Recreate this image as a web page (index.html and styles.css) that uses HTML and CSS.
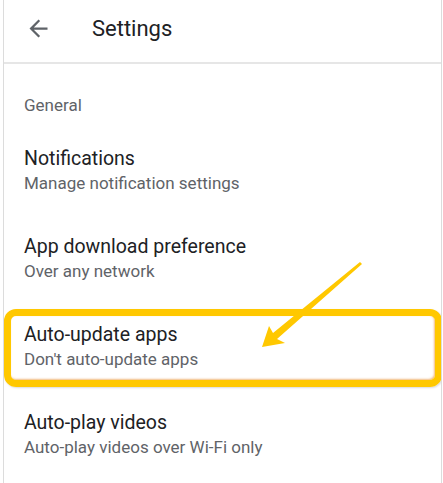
FILE: index.html
```html
<!DOCTYPE html>
<html lang="en">
<head>
    <meta charset="UTF-8">
    <meta name="viewport" content="width=device-width, initial-scale=1.0">
    <title>Settings</title>
    <link rel="stylesheet" href="styles.css">
</head>
<body>
    <div class="screen">
        <header class="app-bar">
            <span class="back-btn">
                <svg width="27" height="27" viewBox="0 0 24 24">
                    <path d="M20 11H7.83l5.59-5.59L12 4l-8 8 8 8 1.41-1.41L7.83 13H20v-2z" fill="#5f6368"/>
                </svg>
            </span>
            <h1>Settings</h1>
        </header>

        <main class="settings">
            <p class="section-label">General</p>

            <div class="setting-item">
                <div class="setting-title">Notifications</div>
                <div class="setting-sub">Manage notification settings</div>
            </div>

            <div class="setting-item">
                <div class="setting-title">App download preference</div>
                <div class="setting-sub">Over any network</div>
            </div>

            <div class="setting-item highlighted">
                <div class="setting-title">Auto-update apps</div>
                <div class="setting-sub">Don't auto-update apps</div>
                <span class="highlight-box"></span>
            </div>

            <div class="setting-item">
                <div class="setting-title">Auto-play videos</div>
                <div class="setting-sub">Auto-play videos over Wi-Fi only</div>
            </div>
        </main>

        <svg class="pointer" width="443" height="483" viewBox="0 0 443 483">
            <polygon points="360,262 362,264 277,339 285,343 262,347 269,326 273,333" fill="#ffc800"/>
        </svg>
    </div>
</body>
</html>
```

FILE: styles.css
```css
* {
    margin: 0;
    padding: 0;
    box-sizing: border-box;
}

body {
    font-family: Roboto, 'Noto Sans', Arial, sans-serif;
    background: #fff;
    color: #202124;
}

.screen {
    position: relative;
    margin-left: 3px;
    width: 439px;
    height: 483px;
    border-left: 1px solid #dcdcdc;
    border-right: 1px solid #dcdcdc;
    overflow: hidden;
}

.app-bar {
    display: flex;
    align-items: center;
    height: 64px;
    padding-bottom: 6px;
    border-bottom: 2px solid #e6e6e6;
}

.back-btn {
    display: flex;
    width: 27px;
    height: 27px;
    margin-left: 21px;
    margin-right: 40px;
}

.app-bar h1 {
    font-size: 22px;
    font-weight: 400;
    color: #202124;
}

.settings {
    padding-top: 31px;
}

.section-label {
    font-size: 17px;
    line-height: 20px;
    color: #5f6368;
    padding-left: 20px;
    margin-bottom: 12px;
}

.setting-item {
    position: relative;
    padding: 20px;
}

.setting-title {
    font-size: 19.5px;
    line-height: 24px;
    color: #202124;
}

.setting-sub {
    font-size: 17px;
    line-height: 24px;
    color: #5f6368;
}

.highlight-box {
    position: absolute;
    left: 0;
    top: 6px;
    width: 438px;
    height: 78px;
    border: 7px solid #ffc800;
    border-radius: 12px;
    box-shadow: inset -1px -1px 2px rgba(230, 120, 0, 0.5), 1px 1px 2px rgba(0, 0, 0, 0.15);
}

.pointer {
    position: absolute;
    left: -4px;
    top: 0;
}
```
